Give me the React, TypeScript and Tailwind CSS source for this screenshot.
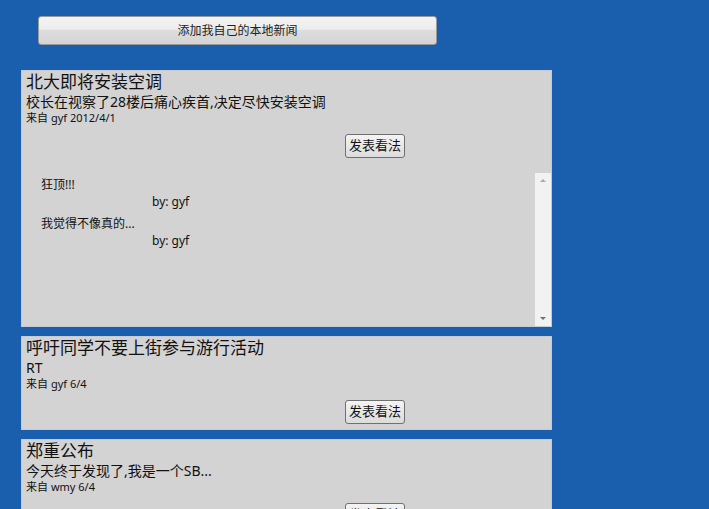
// Local news board: add-news button, news cards with comment button and comment list.

type Comment = { text: string; by: string }

type News = {
  title: string
  body: string
  author: string
  date: string
  comments?: Comment[]
}

const NEWS: News[] = [
  {
    title: '北大即将安装空调',
    body: '校长在视察了28楼后痛心疾首,决定尽快安装空调',
    author: 'gyf',
    date: '2012/4/1',
    comments: [
      { text: '狂顶!!!', by: 'gyf' },
      { text: '我觉得不像真的...', by: 'gyf' },
    ],
  },
  { title: '呼吁同学不要上街参与游行活动', body: 'RT', author: 'gyf', date: '6/4' },
  { title: '郑重公布', body: '今天终于发现了,我是一个SB...', author: 'wmy', date: '6/4' },
]

const FONT = { fontFamily: '"Noto Sans", "Noto Sans CJK SC", sans-serif' }

function CommentList({ comments }: { comments: Comment[] }) {
  return (
    <div className="mt-[15px] flex h-[153px] bg-[#d3d3d3]">
      <div className="flex-1 pt-[4px] text-[12px] leading-[16px] text-[#111]">
        {comments.map((c, i) => (
          <div key={i} className="mb-[6px]">
            <div className="pl-[19px]">{c.text}</div>
            <div className="mt-[1px] pl-[130px]">by: {c.by}</div>
          </div>
        ))}
      </div>
      <div className="flex w-[16px] flex-col items-center justify-between bg-[#f2f2f2] py-[6px]">
        <span className="h-0 w-0 border-x-[3px] border-b-[3px] border-x-transparent border-b-[#a8a8a8]" />
        <span className="h-0 w-0 border-x-[3px] border-t-[3px] border-x-transparent border-t-[#707070]" />
      </div>
    </div>
  )
}

function NewsCard({ news }: { news: News }) {
  return (
    <div className="w-[531px] border border-[#c6cbd3] bg-[#d3d3d3] text-[#111]">
      <div className="px-[4px]">
        <div className="text-[17px] leading-[22px]">{news.title}</div>
        <div className="text-[14px] leading-[18px]">{news.body}</div>
        <div className="text-[11px] leading-[13px]">
          来自 {news.author} {news.date}
        </div>
      </div>
      <button
        type="button"
        className="ml-[323px] mt-[10px] block h-[24px] w-[60px] rounded-[3px] border border-[#707070] bg-gradient-to-b from-[#f4f4f4] to-[#dcdcdc] text-[13px] text-[#111]"
      >
        发表看法
      </button>
      {news.comments ? <CommentList comments={news.comments} /> : <div className="h-[5px]" />}
    </div>
  )
}

export default function App() {
  return (
    <div className="h-[509px] w-[709px] overflow-hidden bg-[#1a5fad]" style={FONT}>
      <div className="pt-[16px]">
        <button
          type="button"
          className="ml-[38px] block h-[29px] w-[399px] rounded-[3px] border border-[#9a9a9a] bg-[linear-gradient(to_bottom,#f4f4f4_0%,#ececec_45%,#dddddd_50%,#d4d4d4_100%)] text-[12px] text-[#222]"
        >
          添加我自己的本地新闻
        </button>
      </div>
      <div className="ml-[21px] mt-[25px] flex flex-col gap-[9px]">
        {NEWS.map((n, i) => (
          <NewsCard key={i} news={n} />
        ))}
      </div>
    </div>
  )
}
